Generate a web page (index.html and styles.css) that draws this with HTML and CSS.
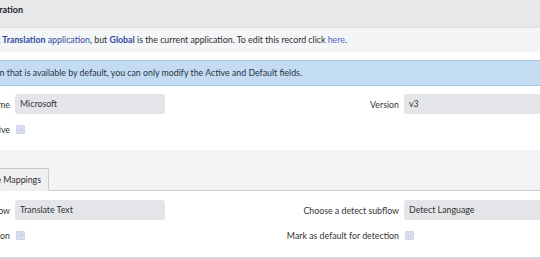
FILE: index.html
```html
<!DOCTYPE html>
<html lang="en">
<head>
    <meta charset="UTF-8">
    <title>Translator Configuration</title>
    <link rel="stylesheet" href="styles.css">
</head>
<body>
    <div class="page">
        <div class="title-bar">
            <div class="line"><span>Translator Configuration</span></div>
        </div>

        <div class="notice">
            <div class="line"><span>This record is in the <a class="app" href="#"><b>Dynamic Translation</b> application</a>, but <b class="app">Global</b> is the current application. To edit this record click <a href="#">here</a>.</span></div>
        </div>

        <div class="info">
            <div class="line"><span>This is a translator configuration that is available by default, you can only modify the Active and Default fields.</span></div>
        </div>

        <div class="form top-form">
            <div class="field">
                <label>Name</label>
                <div class="input">Microsoft</div>
            </div>
            <div class="field">
                <label>Version</label>
                <div class="input">v3</div>
            </div>
            <div class="field">
                <label>Active</label>
                <span class="check">
                    <svg viewBox="0 0 10 10" width="9" height="9"><path d="M2.2 5.2 L4.1 7 L7.9 2.8" fill="none" stroke="#bcc0e2" stroke-width="1.3"/></svg>
                </span>
            </div>
            <div></div>
        </div>

        <div class="tabs">
            <div class="line"><span class="tab">Language Mappings</span></div>
        </div>

        <div class="form bottom-form">
            <div class="field">
                <label>Choose a translate subflow</label>
                <div class="input">Translate Text</div>
            </div>
            <div class="field">
                <label>Choose a detect subflow</label>
                <div class="input">Detect Language</div>
            </div>
            <div class="field">
                <label>Mark as default for translation</label>
                <span class="check">
                    <svg viewBox="0 0 10 10" width="9" height="9"><path d="M2.2 5.2 L4.1 7 L7.9 2.8" fill="none" stroke="#bcc0e2" stroke-width="1.3"/></svg>
                </span>
            </div>
            <div class="field">
                <label>Mark as default for detection</label>
                <span class="check">
                    <svg viewBox="0 0 10 10" width="9" height="9"><path d="M2.2 5.2 L4.1 7 L7.9 2.8" fill="none" stroke="#bcc0e2" stroke-width="1.3"/></svg>
                </span>
            </div>
        </div>
    </div>
</body>
</html>
```

FILE: styles.css
```css
:root {
    --text: #2e2e2e;
    --link: #4a66c4;
    --link-strong: #2f4b9f;
    --field: #e4e5e8;
}

* {
    margin: 0;
    padding: 0;
    box-sizing: border-box;
}

body {
    font-family: Lato, "Open Sans", sans-serif;
    font-size: 8.8px;
    color: var(--text);
    background: #fff;
    overflow: hidden;
}

/* the page is wider than the window; it starts left of it */
.page {
    margin-left: -110px;
    width: 800px;
}

/* text lines end at a fixed point, longer text runs off to the left */
.line {
    display: flex;
    justify-content: flex-end;
    white-space: nowrap;
}

.title-bar {
    height: 28px;
    padding-top: 4px;
    background: #e7e8ea;
    border-bottom: 1px solid #dedfe2;
    font-size: 9px;
    font-weight: 700;
    color: #262626;
}

.title-bar .line {
    width: 133px;
}

.notice {
    height: 24px;
    line-height: 24px;
    background: #f4f5f7;
}

.notice .line {
    width: 457px;
}

a {
    color: var(--link);
    text-decoration: none;
}

.app,
.app b {
    color: var(--link-strong);
}

b.app {
    font-weight: 700;
}

.info {
    margin-top: 8px;
    height: 26px;
    line-height: 24px;
    background: #c3dcf1;
    border-top: 1px solid #a2c6e6;
    border-bottom: 1px solid #a2c6e6;
    color: #283644;
}

.info .line {
    width: 412px;
}

.form {
    display: grid;
    grid-template-columns: 389px 389px;
    row-gap: 5px;
}

.top-form {
    padding: 8px 0 11px;
}

.bottom-form {
    padding: 9px 0 12px;
    border-bottom: 2px solid #d6d7da;
}

.field {
    display: flex;
    align-items: center;
    gap: 5px;
    height: 20px;
}

.field label {
    width: 120px;
    flex: none;
    display: flex;
    justify-content: flex-end;
    white-space: nowrap;
    color: #333;
}

.input {
    width: 150px;
    height: 20px;
    line-height: 20px;
    padding: 0 5px;
    background: var(--field);
    border-radius: 3px;
    color: #333;
}

.check {
    width: 9px;
    height: 9px;
    margin-left: 1px;
    display: flex;
    align-items: center;
    justify-content: center;
    background: #dadef1;
    border: 1px solid #d0d3ea;
    border-radius: 1px;
}

.tabs {
    height: 41px;
    padding-top: 18px;
    background: #f4f4f6;
    border-bottom: 1px solid #c9cacc;
}

.tabs .line {
    width: 159px;
    height: 22px;
}

.tab {
    height: 23px;
    line-height: 22px;
    padding: 0 7px;
    background: #f0f0f2;
    border: 1px solid #c9cacc;
    border-bottom-color: #f0f0f2;
    border-radius: 2px 2px 0 0;
}
```
